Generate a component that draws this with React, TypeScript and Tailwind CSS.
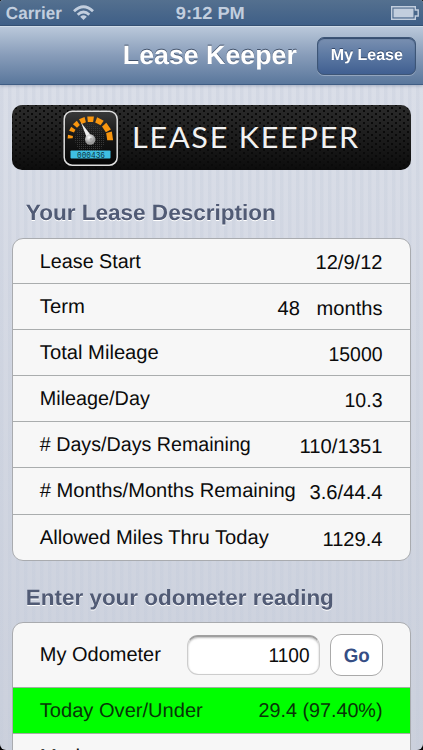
import React from "react";

const lease = [
  { label: "Lease Start", value: "12/9/12", lw: 101, vw: 67, h: "h-[45px]" },
  { label: "Term", value: "48\u00a0\u00a0\u00a0months", lw: 45, vw: 105, h: "h-[46px]" },
  { label: "Total Mileage", value: "15000", lw: 119, vw: 54, h: "h-[46px]" },
  { label: "Mileage/Day", value: "10.3", lw: 110, vw: 38, h: "h-[46px]" },
  { label: "# Days/Days Remaining", value: "110/1351", lw: 211, vw: 83, h: "h-[46px]" },
  { label: "# Months/Months Remaining", value: "3.6/44.4", lw: 256, vw: 73, h: "h-[47px]" },
  { label: "Allowed Miles Thru Today", value: "1129.4", lw: 229, vw: 60, h: "h-[45px]" },
];

function Label({ text, width, anchor = "start", size = 20, bold = false, fill = "#0b0b0b" }: {
  text: string; width: number; anchor?: "start" | "end"; size?: number; bold?: boolean; fill?: string;
}) {
  return (
    <svg width={width} height="26" className="block shrink-0 overflow-visible">
      <text
        x={anchor === "end" ? width - 0.5 : -0.2}
        y="18.9"
        textAnchor={anchor}
        textLength={width}
        lengthAdjust="spacingAndGlyphs"
        fontSize={size}
        fontWeight={bold ? 700 : 400}
        fill={fill}
        textRendering="geometricPrecision"
      >
        {text}
      </text>
    </svg>
  );
}

function Gauge() {
  const ticks = [-84, -63, -43, -22, 1, 27, 55, 82];
  return (
    <svg width="56" height="56" viewBox="0 0 56 56" className="shrink-0">
      <defs>
        <linearGradient id="case" x2="0" y2="1">
          <stop stopColor="#3a3a3a" /><stop offset=".45" stopColor="#171717" /><stop offset="1" stopColor="#050505" />
        </linearGradient>
        <radialGradient id="hub" cx=".4" cy=".3">
          <stop stopColor="#fff" /><stop offset="1" stopColor="#999" />
        </radialGradient>
        <pattern id="mesh" width="2" height="2" patternUnits="userSpaceOnUse"><rect width="1" height="1" fill="#383838" /></pattern>
      </defs>
      <rect x="1.2" y="1.2" width="53" height="54" rx="8" fill="url(#case)" stroke="#dedede" strokeWidth="1.5" />
      <circle cx="27" cy="29" r="15" fill="url(#mesh)" />
      {ticks.map((a, i) => {
        const w = 2.4 + i * 0.72;
        const t = 5 + i * 0.12;
        return (
          <path key={a} transform={`translate(27.2 29) rotate(${a})`} fill="#f9960f"
            d={`M${-w / 2 - 0.7} -22.5 L${w / 2 + 0.7} -22.5 L${w / 2} ${-22.5 + t} L${-w / 2} ${-22.5 + t}Z`} />
        );
      })}
      <path d="M18 12.5 L30 28 L25 31Z" fill="#eee" />
      <circle cx="27.2" cy="29.5" r="5.2" fill="url(#hub)" />
      <circle cx="28" cy="29.5" r="1.4" fill="#aaa" />
      <rect x="7.5" y="40.5" width="40" height="8" rx=".8" fill="#3fc0e3" />
      <text x="14" y="47.6" textLength="28" lengthAdjust="spacingAndGlyphs" fontSize="9" fontFamily="Liberation Mono, monospace" fill="#0c3442">000436</text>
    </svg>
  );
}

export default function App() {
  return (
    <div className="h-[750px] w-[423px] bg-black">
    <div className="flex h-full w-full flex-col overflow-hidden rounded-t-[3px] rounded-b-[6px] bg-[linear-gradient(180deg,#dadee8_80px,#cbd0dc_750px)] font-['Liberation_Sans',Arial,sans-serif]">
      <header className="relative z-10 shrink-0 shadow-[0_1px_3px_#75809a80]">
        <div className="flex h-[26px] items-center border-b border-[#344f72] bg-[linear-gradient(#54708f,#3f5f87)] pl-1.5 pr-1">
          <Label text="Carrier" width={56} size={17.5} bold fill="#c2cede" />
          <svg width="21" height="16" viewBox="0 0 21 16" className="ml-[11px]" fill="none" stroke="#c2cede" strokeWidth="2.8">
            <path d="M1 6.2Q10.5 -2.8 20 6.2M4.7 9.7Q10.5 4.2 16.3 9.7" />
            <path d="M7.2 11.7Q10.5 9 13.8 11.7L10.5 15Z" fill="#c2cede" stroke="none" />
          </svg>
          <div className="ml-[82px]"><Label text="9:12 PM" width={69} size={17.5} bold fill="#c2cede" /></div>
          <svg width="28" height="14" viewBox="0 0 28 14" className="ml-auto">
            <path d="M.7 .7H24.3V4H27.2V10H24.3V13.3H.7Z" fill="none" stroke="#c2cede" strokeWidth="1.4" />
            <rect x="2.5" y="2.6" width="20" height="8.8" fill="#c2cede" />
          </svg>
        </div>
        <div className="flex h-[59px] items-center border-b border-[#405d84] border-t border-t-[#d1dce8] bg-[linear-gradient(#bac8da,#879cb9_50%,#5a779c)] pl-[123px] pr-[7px]">
          <div className="pt-[4px] drop-shadow-[0_-1px_0_#44546d]"><Label text="Lease Keeper" width={174} size={26.5} bold fill="#fff" /></div>
          <button className="ml-auto flex h-[38px] w-[99px] items-center justify-center rounded-[7px] border border-[#3d5576] bg-[linear-gradient(#7a90b1,#5b78a2_50%,#405f91)] shadow-[inset_0_1px_1px_#30476a,0_1px_0_#93a5be]">
            <span className="-mt-[3px] drop-shadow-[0_-1px_0_#34496b]"><Label text="My Lease" width={72} size={16} bold fill="#fff" /></span>
          </button>
        </div>
      </header>
      <main className="flex min-h-0 grow flex-col bg-[repeating-linear-gradient(90deg,#c3cbda50_0px,#c3cbda50_3px,transparent_4px,transparent_8px)] px-3 pt-5">
        <div className="flex h-[65px] w-[399px] shrink-0 items-center rounded-[10px] bg-[radial-gradient(circle,#0a0a0a_0.8px,transparent_1.5px),radial-gradient(circle,#0a0a0a_0.8px,transparent_1.5px),linear-gradient(#2b2b2b,#1c1c1c_50%,#0c0c0c)] bg-[length:8px_6px,8px_6px,100%_100%] bg-[position:0_0,4px_3px,0_0] pl-[51px]">
          <Gauge />
          <svg width="230" height="34" className="ml-[14px] overflow-visible">
            <text x="-1" y="26.5" textLength="228" lengthAdjust="spacingAndGlyphs" letterSpacing="1.6" fontFamily="Lato, sans-serif" fontSize="28" fill="#f2f2f2">LEASE KEEPER</text>
          </svg>
        </div>
        <div className="mt-[31px] flex h-[26px] shrink-0 pl-[13.5px] drop-shadow-[0_1px_0_white]"><Label text="Your Lease Description" width={250} size={22} bold fill="#515b75" /></div>
        <section className="mt-[11px] shrink-0 overflow-hidden rounded-[11px] border border-[#a9abaf] bg-[#f7f7f7]">
          {lease.map((r, i) => (
            <div key={r.label} className={`flex justify-between pl-[27px] pr-[27px] ${r.h} ${i < 6 ? "border-b border-[#aaadae]" : ""}`}>
              <div className="pt-[10px]"><Label text={r.label} width={r.lw} /></div>
              <div className={i ? "pt-[12px]" : "pt-[11px]"}><Label text={r.value} width={r.vw} anchor="end" /></div>
            </div>
          ))}
        </section>
        <div className="mt-[25px] flex h-[26px] shrink-0 pl-[13.5px] drop-shadow-[0_1px_0_white]"><Label text="Enter your odometer reading" width={308} size={22} bold fill="#515b75" /></div>
        <section className="mt-[10px] h-[150px] shrink-0 overflow-hidden rounded-t-[11px] border border-[#a9abaf] bg-[#f7f7f7]">
          <div className="flex h-16 items-center pl-[27px] pr-[26px]">
            <Label text="My Odometer" width={121} />
            <div className="ml-[26px] flex h-10 w-[133px] items-center justify-end rounded-[11px] border border-[#cdcdcd] border-t-2 border-t-[#a0a0a0] bg-white pr-[9px] shadow-[inset_0_1px_2px_#bbb]"><Label text="1100" width={41} anchor="end" /></div>
            <button className="ml-[10px] flex h-[42px] w-[53px] items-center justify-center rounded-[11px] border border-[#aaa] bg-white"><div className="pt-[2px]"><Label text="Go" width={26} size={19.5} bold fill="#354e85" /></div></button>
          </div>
          <div className="flex h-[47px] items-center justify-between border-y border-[#a4ada4] bg-[#00ff00] px-[27px]">
            <Label text="Today Over/Under" width={163} fill="#083408" />
            <Label text="29.4 (97.40%)" width={124} anchor="end" fill="#083408" />
          </div>
          <div className="pl-[27px] pt-[10px]"><Label text="Markup" width={69} /></div>
        </section>
      </main>
    </div>
    </div>
  );
}
